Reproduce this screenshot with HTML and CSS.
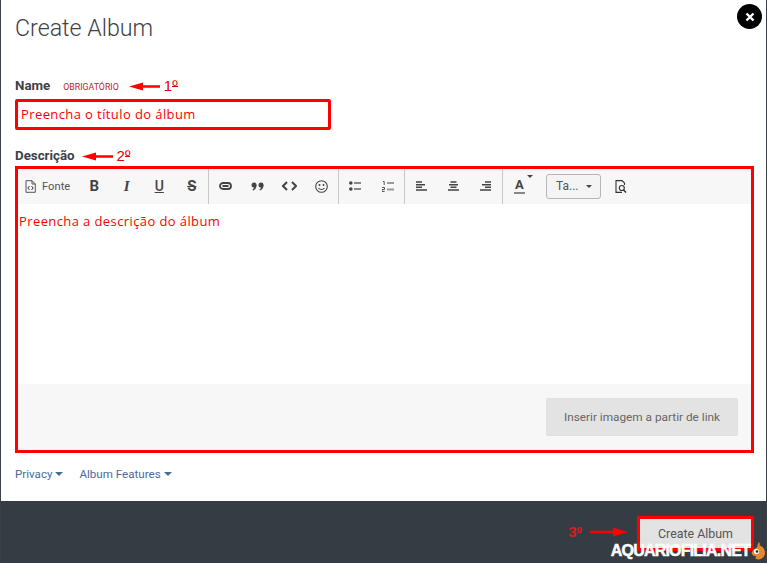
FILE: index.html
```html
<!DOCTYPE html>
<html lang="en">
<head>
    <meta charset="utf-8">
    <title>Create Album</title>
    <link rel="stylesheet" href="styles.css">
</head>
<body>
    <div class="modal">
        <button class="close" aria-label="Close">
            <svg width="10" height="10" viewBox="0 0 10 10"><path d="M1.500 1.500l7 7M8.500 1.500l-7 7" stroke="#fff" stroke-width="2.400" fill="none"/></svg>
        </button>

        <div class="modal-body">
            <h1 class="title">Create Album</h1>

            <div class="label-row name-row">
                <label class="label">Name</label>
                <span class="required">OBRIGATÓRIO</span>
                <svg class="arrow" width="31" height="9" viewBox="0 0 31 9"><path d="M0 4.500l14-4v2.800h17v2.400h-17v2.800z" fill="#f00"/></svg>
                <span class="step">1<span class="ord">º</span></span>
            </div>
            <div class="name-box">Preencha o título do álbum</div>

            <div class="label-row desc-row">
                <label class="label">Descrição</label>
                <svg class="arrow" width="31" height="9" viewBox="0 0 31 9"><path d="M0 4.500l14-4v2.800h17v2.400h-17v2.800z" fill="#f00"/></svg>
                <span class="step">2<span class="ord">º</span></span>
            </div>

            <div class="editor">
                <div class="toolbar">
                    <div class="group group-first">
                        <span class="source">
                            <svg width="11" height="13" viewBox="0 0 11 13"><path d="M1 .7h6l3.300 3.300v8.300h-9.300zM7 .7v3.300h3.300" fill="none" stroke="#555" stroke-width="1"/><path d="M4.500 6l-1.700 2 1.700 2M6.500 6l1.700 2-1.700 2" fill="none" stroke="#333" stroke-width="1"/></svg>
                            <span class="source-text">Fonte</span>
                        </span>
                    </div>
                    <div class="group group-text">
                        <span class="tool glyph bold">B</span>
                        <span class="tool glyph italic">I</span>
                        <span class="tool glyph under">U</span>
                        <span class="tool glyph strike">S</span>
                    </div>
                    <div class="group group-links">
                        <span class="tool">
                            <svg width="13" height="8" viewBox="0 0 13 8"><rect x="1" y="1" width="11" height="6" rx="3" fill="none" stroke="#444" stroke-width="1.800"/><path d="M3.500 4h6" stroke="#444" stroke-width="2"/></svg>
                        </span>
                        <span class="tool">
                            <svg width="13" height="9" viewBox="0 0 13 9"><circle cx="3" cy="3" r="2.500" fill="#444"/><circle cx="10" cy="3" r="2.500" fill="#444"/><path d="M5.500 3c0 3-1.500 5-3.500 5.500l-.5-1c1-.5 1.500-1.500 1.500-2.500zM12.500 3c0 3-1.500 5-3.500 5.500l-.5-1c1-.5 1.500-1.500 1.500-2.500z" fill="#444"/></svg>
                        </span>
                        <span class="tool">
                            <svg width="15" height="10" viewBox="0 0 15 10"><path d="M5 1l-4 4 4 4M10 1l4 4-4 4" fill="none" stroke="#444" stroke-width="2"/></svg>
                        </span>
                        <span class="tool">
                            <svg width="13" height="13" viewBox="0 0 13 13"><circle cx="6.500" cy="6.500" r="5.800" fill="none" stroke="#444" stroke-width="1.100"/><circle cx="4.500" cy="5" r="1" fill="#444"/><circle cx="8.500" cy="5" r="1" fill="#444"/><path d="M3.500 8c1.500 2 4.500 2 6 0" fill="none" stroke="#444" stroke-width="1.100"/></svg>
                        </span>
                    </div>
                    <div class="group group-lists">
                        <span class="tool">
                            <svg width="12" height="10" viewBox="0 0 12 10"><circle cx="1.800" cy="2" r="1.800" fill="#444"/><circle cx="1.800" cy="8" r="1.800" fill="#444"/><path d="M5 2h7M5 8h7" stroke="#888" stroke-width="2"/></svg>
                        </span>
                        <span class="tool">
                            <svg width="12" height="11" viewBox="0 0 12 11"><path d="M1 .5h1.200v3.500M0 6.500h2.500v2h-2.500v2h2.600" fill="none" stroke="#555" stroke-width="1"/><path d="M5 2h7M5 8.500h7" stroke="#999" stroke-width="2"/></svg>
                        </span>
                    </div>
                    <div class="group group-align">
                        <span class="tool">
                            <svg width="11" height="10" viewBox="0 0 11 10"><path d="M0 1h6M0 3.700h9M0 6.300h6M0 9h11" stroke="#444" stroke-width="1.500"/></svg>
                        </span>
                        <span class="tool">
                            <svg width="11" height="10" viewBox="0 0 11 10"><path d="M2.500 1h6M1 3.700h9M2.500 6.300h6M0 9h11" stroke="#444" stroke-width="1.500"/></svg>
                        </span>
                        <span class="tool">
                            <svg width="11" height="10" viewBox="0 0 11 10"><path d="M5 1h6M2 3.700h9M5 6.300h6M0 9h11" stroke="#444" stroke-width="1.500"/></svg>
                        </span>
                    </div>
                    <div class="group group-last">
                        <span class="tool color">
                            <span class="color-a">A</span>
                            <span class="caret color-caret"></span>
                        </span>
                        <span class="combo">
                            <span>Ta...</span>
                            <span class="caret"></span>
                        </span>
                        <span class="tool preview">
                            <svg width="12" height="13" viewBox="0 0 12 13"><path d="M7 12.400h-6v-11.800h6l2.500 2.500v2" fill="none" stroke="#333" stroke-width="1.100"/><circle cx="6.800" cy="8" r="2.500" fill="none" stroke="#333" stroke-width="1.200"/><path d="M8.600 9.900l2.400 2.500" stroke="#333" stroke-width="1.500"/></svg>
                        </span>
                    </div>
                </div>
                <div class="editor-area">Preencha a descrição do álbum</div>
                <div class="editor-foot">
                    <button class="link-image">Inserir imagem a partir de link</button>
                </div>
            </div>

            <div class="options">
                <a class="option">Privacy<span class="caret caret-blue"></span></a>
                <a class="option">Album Features<span class="caret caret-blue"></span></a>
            </div>
        </div>

        <div class="modal-footer">
            <span class="step-three">3<span class="ord">º</span></span>
            <svg class="arrow-right" width="38" height="10" viewBox="0 0 38 10"><path d="M38 5l-15-4.500v3.300h-23v2.400h23v3.300z" fill="#f00"/></svg>
            <button class="create">Create Album</button>
        </div>

        <div class="watermark">
            <span>AQUARIOFILIA.NET</span>
            <svg width="14" height="18" viewBox="0 0 14 18"><path d="M8 0c1 1.500 1 2.500.5 3.500 3 1 5.500 3.500 5.500 7 0 4-3 7-6.500 7-1 0-2-.3-3-1 0-1 .5-1.500 1-2-2.500-.3-4.500-1.500-5-3.500 1-2.500 3-4.500 6-6-.3-2 .3-3.500 1.500-5z" fill="#e8872b"/><circle cx="5.500" cy="9.500" r="2.600" fill="#fff"/><circle cx="6" cy="9.500" r="1.300" fill="#222"/></svg>
        </div>
    </div>
</body>
</html>
```

FILE: styles.css
```css
*
{
    box-sizing: border-box;
}
html, body
{
    height: 100%;
}
body
{
    margin: 0;
    background-color: #3a4048;
    font-family: Roboto, "Liberation Sans", sans-serif;
    color: #3d4148;
    overflow: hidden;
}
.modal
{
    position: relative;
    height: 563px;
    margin: 0 1px 0 1px;
    display: flex;
    flex-direction: column;
}
.modal-body
{
    height: 501px;
    background-color: #fff;
    padding: 0 11px 0 14px;
}
.close
{
    position: absolute;
    top: 4px;
    right: 4px;
    width: 25px;
    height: 25px;
    border: 0;
    padding: 0;
    border-radius: 50%;
    background-color: #000;
    display: flex;
    align-items: center;
    justify-content: center;
}
.title
{
    margin: 0;
    padding-top: 14px;
    height: 76px;
    font-size: 23.200px;
    line-height: 28px;
    font-weight: 300;
    color: #3d4148;
}
.label-row
{
    display: flex;
    align-items: center;
    height: 18px;
}
.label
{
    font-size: 13.300px;
    font-weight: 700;
    color: #3d4148;
}
.required
{
    margin: 3px 0 0 13px;
    font-size: 8.800px;
    color: #c8202a;
}
.arrow
{
    margin: 2px 0 0 10px;
}
.desc-row .arrow
{
    margin-left: 7px;
}
.step
{
    margin-left: 4px;
    font-family: "Liberation Sans", sans-serif;
    font-size: 15px;
    color: #e00000;
}
.ord
{
    position: relative;
}
.ord::after
{
    content: "";
    position: absolute;
    left: 0;
    right: 0;
    top: 9px;
    height: 1px;
    background-color: currentColor;
}
.name-box
{
    width: 316px;
    height: 31px;
    margin-top: 5px;
    border: 3px solid #f00;
    border-radius: 2px;
    padding: 0 3px;
    line-height: 25px;
    font-family: "Open Sans", sans-serif;
    font-size: 13px;
    letter-spacing: 0.4px;
    color: #f00;
}
.desc-row
{
    margin-top: 16px;
}
.editor
{
    width: 739px;
    height: 287px;
    margin-top: 2px;
    border: 3px solid #f00;
    display: flex;
    flex-direction: column;
}
.toolbar
{
    height: 35px;
    background-color: #f7f7f7;
    display: flex;
}
.group
{
    display: flex;
    align-items: center;
    padding-bottom: 1px;
    border-right: 1px solid #c8c8c8;
}
.group-first
{
    width: 60px;
    border-right: 0;
}
.group-text
{
    width: 131px;
}
.group-links
{
    width: 130px;
}
.group-lists
{
    width: 66px;
}
.group-align
{
    width: 98px;
}
.group-last
{
    border-right: 0;
}
.source
{
    display: flex;
    align-items: center;
    margin-left: 7px;
    gap: 6px;
}
.source-text
{
    font-size: 11.200px;
    color: #555;
}
.tool
{
    flex: 1;
    height: 100%;
    display: flex;
    align-items: center;
    justify-content: center;
}
.glyph
{
    font-size: 15px;
    color: #444;
}
.bold
{
    font-weight: 700;
}
.italic
{
    font-family: "Liberation Serif", serif;
    font-style: italic;
    font-weight: 700;
}
.under
{
    text-decoration: underline;
    font-size: 14px;
    font-weight: 500;
}
.strike
{
    text-decoration: line-through;
    font-weight: 700;
}
.color
{
    flex: none;
    width: 32.500px;
    position: relative;
}
.color-a
{
    font-size: 13px;
    font-weight: 700;
    color: #444;
    border-bottom: 2px solid #888;
    line-height: 14px;
    padding: 0 1px;
}
.caret
{
    width: 0;
    height: 0;
    border-left: 3px solid transparent;
    border-right: 3px solid transparent;
    border-top: 3px solid #444;
}
.color-caret
{
    position: absolute;
    top: 6px;
    right: 3px;
}
.combo
{
    width: 55px;
    height: 25px;
    margin-left: 10.500px;
    border: 1px solid #b5b5b5;
    border-radius: 3px;
    background-color: #f4f4f4;
    display: flex;
    align-items: center;
    justify-content: space-between;
    padding: 0 8px 0 9px;
    font-size: 12px;
    color: #555;
}
.preview
{
    flex: none;
    width: 32.500px;
    margin-left: 4px;
}
.editor-area
{
    height: 180px;
    background-color: #fff;
    padding: 8px 1px;
    font-family: "Open Sans", sans-serif;
    font-size: 13px;
    letter-spacing: 0.4px;
    color: #f00;
}
.editor-foot
{
    flex: 1;
    background-color: #f7f7f7;
    display: flex;
    justify-content: flex-end;
    align-items: flex-start;
    padding: 14px 13px 0 0;
}
.link-image
{
    width: 192px;
    height: 38px;
    border: 1px solid #e0e0e0;
    border-radius: 2px;
    background-color: #e3e3e3;
    font-family: inherit;
    font-size: 11.800px;
    color: #666;
}
.options
{
    display: flex;
    gap: 16px;
    margin-top: 14px;
}
.option
{
    display: flex;
    align-items: center;
    font-size: 11.600px;
    line-height: 14px;
    color: #4a6b9a;
}
.caret-blue
{
    margin-left: 3px;
    border-left-width: 4px;
    border-right-width: 4px;
    border-top: 4px solid #4a6b9a;
}
.modal-footer
{
    flex: 1;
    background-color: #363c43;
    display: flex;
    align-items: flex-start;
    justify-content: flex-end;
    padding: 15px 12px 0 0;
}
.step-three
{
    margin: 7px 8px 0 0;
    font-family: "Liberation Sans", sans-serif;
    font-size: 15px;
    line-height: 17px;
    font-weight: 700;
    color: #d81e1e;
}
.arrow-right
{
    margin: 11px 9px 0 0;
}
.create
{
    width: 117px;
    height: 35px;
    border: 3px solid #f00;
    padding-bottom: 2px;
    background-color: #e3e3e3;
    font-family: inherit;
    font-size: 12.400px;
    color: #555;
}
.watermark
{
    position: absolute;
    right: 1px;
    bottom: 3px;
    display: flex;
    align-items: center;
    gap: 1px;
    font-family: "Liberation Sans", sans-serif;
    font-weight: 700;
    font-size: 16px;
    letter-spacing: -0.8px;
    line-height: 16px;
    color: #fff;
    -webkit-text-stroke: 0.5px #fff;
}
```
